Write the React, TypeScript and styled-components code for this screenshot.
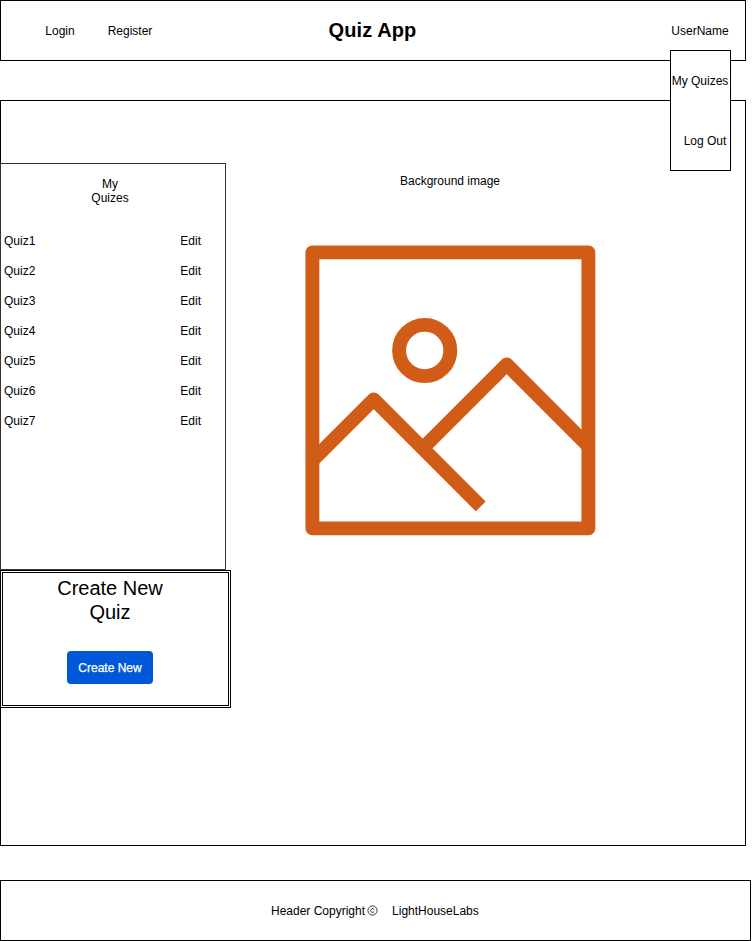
import React from "react";
import styled, { createGlobalStyle } from "styled-components";

const GlobalStyle = createGlobalStyle`
  * { box-sizing: border-box; }
  body {
    margin: 0;
    background: #fff;
    color: #000;
    font: 12px/14px "Liberation Sans", Helvetica, Arial, sans-serif;
  }
`;

const Page = styled.div`
  width: 752px;
  height: 941px;
  display: flex;
  flex-direction: column;
  overflow: hidden;
`;

const Header = styled.header`
  position: relative;
  width: 746px;
  height: 61px;
  border: 1px solid #000;
  display: grid;
  grid-template-columns: 24px 70px 70px 1fr 60px 15px;
  align-items: center;
`;

const NavItem = styled.a<{ $column: number }>`
  grid-column: ${(p) => p.$column};
  grid-row: 1;
  text-align: center;
  white-space: nowrap;
`;

const Title = styled.h1`
  grid-column: 1 / -1;
  grid-row: 1;
  margin: 0;
  padding: 0 1px 2px 0;
  font-size: 20px;
  line-height: 24px;
  font-weight: bold;
  letter-spacing: 0.1px;
  text-align: center;
`;

const UserMenu = styled.div`
  position: absolute;
  z-index: 1;
  top: 49px;
  right: 14px;
  width: 61px;
  height: 121px;
  border: 1px solid #000;
  background: #fff;
  display: grid;
  grid-template-rows: 60px 60px;
`;

const MenuItem = styled.a<{ $indent?: number }>`
  display: flex;
  align-items: center;
  justify-content: center;
  padding-left: ${(p) => p.$indent ?? 0}px;
  padding-right: 1px;
  white-space: nowrap;
`;

const Main = styled.main`
  width: 746px;
  height: 746px;
  margin-top: 39px;
  border: 1px solid #000;
  display: flex;
`;

const Sidebar = styled.aside`
  width: 231px;
  margin: 62px 0 0 -1px;
  flex: none;
`;

const QuizPanel = styled.section`
  width: 226px;
  height: 407px;
  border: 1px solid #333;
  background: #fff;
`;

const PanelTitle = styled.h2`
  width: 60px;
  margin: 13px 0 21px 79px;
  padding: 0 10px;
  font: inherit;
  text-align: center;
`;

const QuizList = styled.ul`
  list-style: none;
  margin: 0;
  padding: 0 24px 0 3px;
`;

const QuizRow = styled.li`
  height: 30px;
  display: flex;
  align-items: center;
  justify-content: space-between;
`;

const CreatePanel = styled.section`
  width: 231px;
  height: 138px;
  border: 3px double #000;
  background: #fff;
  display: flex;
  flex-direction: column;
  align-items: center;
  padding: 3px 11px 0 0;
`;

const CreateTitle = styled.h2`
  width: 120px;
  margin: 0;
  font-size: 20px;
  line-height: 24px;
  font-weight: normal;
  text-align: center;
`;

const CreateButton = styled.button`
  width: 86px;
  height: 33px;
  margin-top: 26.5px;
  padding: 1px 0 0;
  border: 0;
  border-radius: 4px;
  background: #0057d8;
  color: #fff;
  font: inherit;
  -webkit-text-stroke: 0.25px #fff;
`;

const Hero = styled.figure`
  width: 291px;
  margin: 73px 0 0 74px;
`;

const Caption = styled.figcaption`
  text-align: center;
  margin-bottom: 57px;
  padding-right: 1px;
`;

const Picture = styled.svg`
  display: block;
  width: 291px;
  height: 291px;
  fill: none;
  stroke: #d05c17;
  stroke-width: 13.9;
  stroke-linejoin: round;
`;

const Footer = styled.footer`
  width: 751px;
  height: 61px;
  margin-top: 34px;
  border: 1px solid #000;
  display: flex;
  align-items: center;
  padding-left: 270px;
`;

const CopyrightMark = styled.svg`
  width: 11px;
  height: 11px;
  margin: -1px 14px 0 2px;
  fill: none;
  stroke: #222;
  stroke-width: 0.9;
`;

const quizzes = [1, 2, 3, 4, 5, 6, 7];

export default function App() {
  return (
    <Page>
      <GlobalStyle />
      <Header>
        <Title>Quiz App</Title>
        <NavItem $column={2}>Login</NavItem>
        <NavItem $column={3}>Register</NavItem>
        <NavItem $column={5}>UserName</NavItem>
        <UserMenu>
          <MenuItem>My Quizes</MenuItem>
          <MenuItem $indent={10}>Log Out</MenuItem>
        </UserMenu>
      </Header>
      <Main>
        <Sidebar>
          <QuizPanel>
            <PanelTitle>My Quizes</PanelTitle>
            <QuizList>
              {quizzes.map((n) => (
                <QuizRow key={n}>
                  <span>{`Quiz${n}`}</span>
                  <a>Edit</a>
                </QuizRow>
              ))}
            </QuizList>
          </QuizPanel>
          <CreatePanel>
            <CreateTitle>Create New Quiz</CreateTitle>
            <CreateButton>Create New</CreateButton>
          </CreatePanel>
        </Sidebar>
        <Hero>
          <Caption>Background image</Caption>
          <Picture viewBox="305 245 291 291">
            <rect x="312.4" y="252.4" width="276" height="276" />
            <circle cx="424.7" cy="350.5" r="25.6" />
            <path d="M312.4 460.7 373.7 399.4 480.7 506.4" />
            <path d="M423.7 447.4 506.7 364.4 588.4 446.1" />
          </Picture>
        </Hero>
      </Main>
      <Footer>
        <span>Header Copyright</span>
        <CopyrightMark viewBox="0 0 11 11">
          <circle cx="5.5" cy="5.5" r="4.6" />
          <path d="M7.2 4.5A1.9 1.9 0 1 0 7.2 6.5" />
        </CopyrightMark>
        <span>LightHouseLabs</span>
      </Footer>
    </Page>
  );
}
